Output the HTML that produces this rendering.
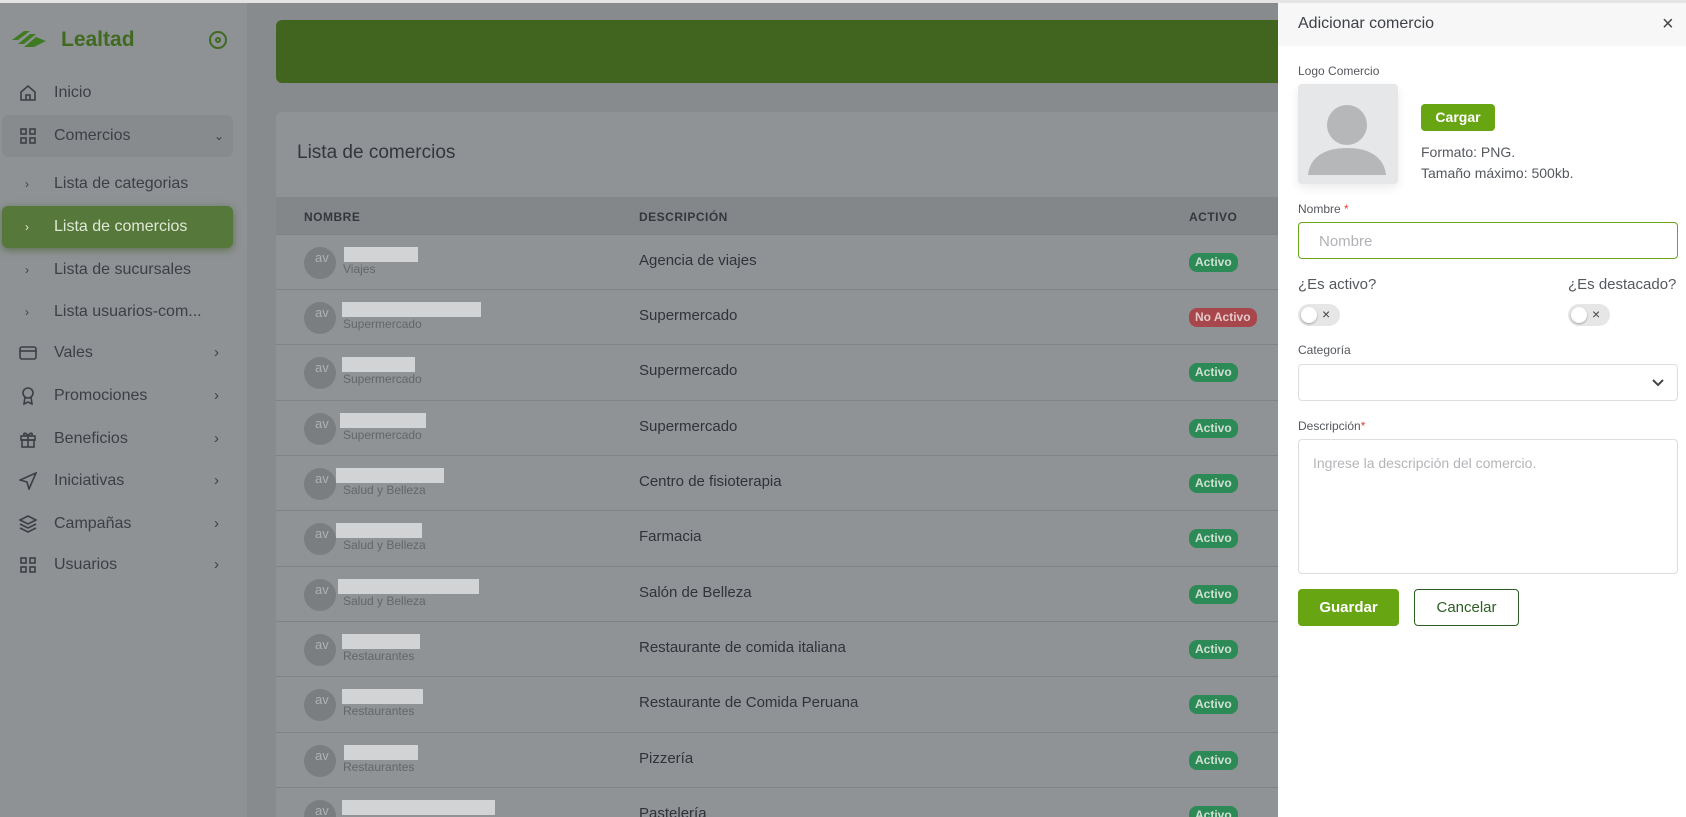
<!DOCTYPE html>
<html style="width:1686px;height:817px;overflow:hidden"><head><meta charset="utf-8"><style>
*{box-sizing:border-box;margin:0;padding:0}
body{width:1686px;height:817px;overflow:hidden;font-family:"Liberation Sans",sans-serif;background:#878b8e;position:relative}
.topline{position:absolute;left:0;top:0;width:1686px;height:3px;background:#e4e4e4;z-index:5}
.sb{position:absolute;left:0;top:0;width:247px;height:817px;background:#8e9295}
.logo{position:absolute;left:12px;top:28px}
.brand{position:absolute;left:61px;top:28px;font-size:21px;font-weight:bold;color:#3f6a1f}
.tgl{position:absolute;left:209px;top:31px;width:18px;height:18px;border:2px solid #3f6a1f;border-radius:50%}
.tgl:after{content:"";position:absolute;left:4px;top:4px;width:6px;height:6px;border:2px solid #3f6a1f;border-radius:50%;box-sizing:border-box}
.it{position:absolute;left:0;width:247px;height:30px;font-size:16px;color:#3c3f44;line-height:30px}
.it .t{position:absolute;left:54px}
.it .ic{position:absolute;left:19px;top:6px;width:18px;height:18px}
.it .ar{position:absolute;left:214px;font-size:15px}
.it .sm{position:absolute;left:25px;font-size:12px}
.hl{position:absolute;left:2px;width:231px;border-radius:6px}
.main-green{position:absolute;left:276px;top:20px;width:1100px;height:63px;background:#41651f;border-radius:6px}
.card{position:absolute;left:276px;top:112px;width:1100px;height:705px;background:#8f9396;border-radius:6px 6px 0 0;overflow:hidden}
.ctitle{position:absolute;left:297px;top:142px;font-size:19px;color:#33363b}
.thead{position:absolute;left:276px;top:197px;width:1100px;height:37px;background:#83878a}
.th{position:absolute;top:210px;font-size:12px;font-weight:bold;color:#34373c;letter-spacing:.5px}
.row{position:absolute;left:276px;width:1100px;height:55px;border-top:1px solid #7f8386;overflow:hidden}
.av{position:absolute;left:28px;top:12px;width:32px;height:32px;border-radius:50%;background:#7a7e80;overflow:hidden;font-size:13px;color:#aeb1b3;line-height:22px;padding-left:11px}
.bar{position:absolute;top:12px;height:15px;background:#d2d3d4}
.sub{position:absolute;left:67px;top:27px;font-size:12px;color:#63676a}
.desc{position:absolute;left:363px;top:17px;font-size:15px;color:#30333a}
.bd{position:absolute;left:913px;top:18px;height:19px;border-radius:8px;font-size:12px;font-weight:bold;color:#cfe0d3;line-height:19px;padding:0 6px;background:#2c8a56}
.bd.no{background:#a8474b;color:#e4c9ca}
.panel{position:absolute;left:1278px;top:0;width:408px;height:817px;background:#fff;z-index:3}
.ph{height:46px;background:#f7f7f7;position:relative}
.ph .tt{position:absolute;left:20px;top:15px;font-size:16px;color:#3e4148}
.ph .x{position:absolute;left:384px;top:13px;font-size:20px;color:#444}
.lbl{position:absolute;left:20px;font-size:12px;color:#55585e}
.lbl b{color:#e04040;font-weight:normal}
.imgbox{position:absolute;left:20px;top:84px;width:100px;height:100px;background:#e6e7e8;border-radius:4px;overflow:hidden;box-shadow:0 4px 10px rgba(0,0,0,.08)}
.btn{position:absolute;border-radius:4px;font-size:15px;text-align:center}
.inp{position:absolute;left:20px;width:380px;border:1px solid #dcdde0;border-radius:4px}
.sw{position:absolute;top:304px;width:42px;height:22px;border-radius:11px;background:#e6e6e6}
.sw:before{content:"";position:absolute;left:3px;top:3px;width:16px;height:16px;border-radius:50%;background:#fff;box-shadow:0 1px 2px rgba(0,0,0,.3)}
.sw:after{content:"×";position:absolute;left:24px;top:2px;font-size:14px;color:#444}
</style></head><body>
<div class="topline"></div>
<div class="sb">
<svg class="logo" width="36" height="22" viewBox="0 0 36 22"><path d="M0 12 L12 3 L18 3 L6 12Z M6 16 L18 6 L24 6 L12 16Z M12 19 L24 9 L34 13 L22 19Z" fill="#3f7a22"/></svg>
<div class="brand">Lealtad</div>
<div class="tgl"></div>
<div class="hl" style="top:115px;height:42px;background:#878b8e"></div>
<div class="hl" style="top:206px;height:42px;background:#56783b;box-shadow:0 2px 8px rgba(60,90,30,.6)"></div>
<div class="it" style="top:78px"><svg class="ic" viewBox="0 0 18 18" fill="none" stroke="#3c3f44" stroke-width="1.6"><path d="M2 8 L9 2 L16 8 V16 H2Z M7 16 V11 H11 V16"/></svg><span class="t">Inicio</span></div>
<div class="it" style="top:121px"><svg class="ic" viewBox="0 0 18 18" fill="none" stroke="#3c3f44" stroke-width="1.6"><rect x="2" y="2" width="5" height="5"/><rect x="11" y="2" width="5" height="5"/><rect x="2" y="11" width="5" height="5"/><rect x="11" y="11" width="5" height="5"/></svg><span class="t">Comercios</span><span class="ar" style="font-size:12px">⌄</span></div>
<div class="it" style="top:169px"><span class="sm">›</span><span class="t">Lista de categorias</span></div>
<div class="it" style="top:212px;color:#dfe8d6"><span class="sm">›</span><span class="t">Lista de comercios</span></div>
<div class="it" style="top:255px"><span class="sm">›</span><span class="t">Lista de sucursales</span></div>
<div class="it" style="top:297px"><span class="sm">›</span><span class="t">Lista usuarios-com...</span></div>
<div class="it" style="top:338px"><svg class="ic" viewBox="0 0 18 18" fill="none" stroke="#3c3f44" stroke-width="1.6"><rect x="1" y="3" width="16" height="12" rx="2"/><path d="M1 7 H17"/></svg><span class="t">Vales</span><span class="ar">›</span></div>
<div class="it" style="top:381px"><svg class="ic" viewBox="0 0 18 18" fill="none" stroke="#3c3f44" stroke-width="1.6"><circle cx="9" cy="6" r="5"/><path d="M6 10 L5 17 L9 15 L13 17 L12 10"/></svg><span class="t">Promociones</span><span class="ar">›</span></div>
<div class="it" style="top:424px"><svg class="ic" viewBox="0 0 18 18" fill="none" stroke="#3c3f44" stroke-width="1.6"><rect x="2" y="6" width="14" height="4"/><rect x="3" y="10" width="12" height="7"/><path d="M9 6 V17 M9 6 C6 1 3 4 6 6 M9 6 C12 1 15 4 12 6"/></svg><span class="t">Beneficios</span><span class="ar">›</span></div>
<div class="it" style="top:466px"><svg class="ic" viewBox="0 0 18 18" fill="none" stroke="#3c3f44" stroke-width="1.6"><path d="M17 1 L1 8 L8 10 L10 17Z"/></svg><span class="t">Iniciativas</span><span class="ar">›</span></div>
<div class="it" style="top:509px"><svg class="ic" viewBox="0 0 18 18" fill="none" stroke="#3c3f44" stroke-width="1.6"><path d="M9 1 L17 5 L9 9 L1 5Z M1 9 L9 13 L17 9 M1 13 L9 17 L17 13"/></svg><span class="t">Campañas</span><span class="ar">›</span></div>
<div class="it" style="top:550px"><svg class="ic" viewBox="0 0 18 18" fill="none" stroke="#3c3f44" stroke-width="1.6"><rect x="2" y="2" width="5" height="5"/><rect x="11" y="2" width="5" height="5"/><rect x="2" y="11" width="5" height="5"/><rect x="11" y="11" width="5" height="5"/></svg><span class="t">Usuarios</span><span class="ar">›</span></div>
</div>
<div class="main-green"></div>
<div class="card"></div>
<div class="ctitle">Lista de comercios</div>
<div class="thead"></div>
<div class="th" style="left:304px">NOMBRE</div>
<div class="th" style="left:639px">DESCRIPCIÓN</div>
<div class="th" style="left:1189px">ACTIVO</div>

<div class="row" style="top:234px"><div class="av">av</div><div class="bar" style="left:68px;width:74px"></div><div class="sub">Viajes</div><div class="desc">Agencia de viajes</div><div class="bd">Activo</div></div>
<div class="row" style="top:289px"><div class="av">av</div><div class="bar" style="left:66px;width:139px"></div><div class="sub">Supermercado</div><div class="desc">Supermercado</div><div class="bd no">No Activo</div></div>
<div class="row" style="top:344px"><div class="av">av</div><div class="bar" style="left:66px;width:73px"></div><div class="sub">Supermercado</div><div class="desc">Supermercado</div><div class="bd">Activo</div></div>
<div class="row" style="top:400px"><div class="av">av</div><div class="bar" style="left:64px;width:86px"></div><div class="sub">Supermercado</div><div class="desc">Supermercado</div><div class="bd">Activo</div></div>
<div class="row" style="top:455px"><div class="av">av</div><div class="bar" style="left:60px;width:108px"></div><div class="sub">Salud y Belleza</div><div class="desc">Centro de fisioterapia</div><div class="bd">Activo</div></div>
<div class="row" style="top:510px"><div class="av">av</div><div class="bar" style="left:60px;width:86px"></div><div class="sub">Salud y Belleza</div><div class="desc">Farmacia</div><div class="bd">Activo</div></div>
<div class="row" style="top:566px"><div class="av">av</div><div class="bar" style="left:62px;width:141px"></div><div class="sub">Salud y Belleza</div><div class="desc">Salón de Belleza</div><div class="bd">Activo</div></div>
<div class="row" style="top:621px"><div class="av">av</div><div class="bar" style="left:66px;width:78px"></div><div class="sub">Restaurantes</div><div class="desc">Restaurante de comida italiana</div><div class="bd">Activo</div></div>
<div class="row" style="top:676px"><div class="av">av</div><div class="bar" style="left:66px;width:81px"></div><div class="sub">Restaurantes</div><div class="desc">Restaurante de Comida Peruana</div><div class="bd">Activo</div></div>
<div class="row" style="top:732px"><div class="av">av</div><div class="bar" style="left:68px;width:74px"></div><div class="sub">Restaurantes</div><div class="desc">Pizzería</div><div class="bd">Activo</div></div>
<div class="row" style="top:787px;height:30px"><div class="av">av</div><div class="bar" style="left:66px;width:153px"></div><div class="desc">Pastelería</div><div class="bd">Activo</div></div>

<div class="panel">
<div class="ph"><div class="tt">Adicionar comercio</div><div class="x">×</div></div>
<div class="lbl" style="top:64px">Logo Comercio</div>
<div class="imgbox"><svg width="100" height="100" viewBox="0 0 100 100"><circle cx="49" cy="41" r="20" fill="#b5b7b9"/><path d="M10 91 C12 72 28 64 49 64 C70 64 86 72 88 91Z" fill="#b5b7b9"/></svg></div>
<div class="btn" style="left:143px;top:104px;width:74px;height:27px;background:#68a512;color:#fff;font-weight:bold;font-size:14px;line-height:27px">Cargar</div>
<div class="lbl" style="left:143px;top:144px;font-size:14px">Formato: PNG.</div>
<div class="lbl" style="left:143px;top:165px;font-size:14px">Tamaño máximo: 500kb.</div>
<div class="lbl" style="top:202px">Nombre <b>*</b></div>
<div class="inp" style="top:222px;height:37px;border:1.5px solid #6aa51a;font-size:15px;color:#b0b2b6;padding:10px 20px">Nombre</div>
<div class="lbl" style="top:276px;font-size:15px">¿Es activo?</div>
<div class="lbl" style="left:290px;top:276px;font-size:15px">¿Es destacado?</div>
<div class="sw" style="left:20px"></div>
<div class="sw" style="left:290px"></div>
<div class="lbl" style="top:343px">Categoría</div>
<div class="inp" style="top:364px;height:37px"><svg style="position:absolute;right:12px;top:13px" width="14" height="10" viewBox="0 0 14 10"><path d="M2 2 L7 7 L12 2" fill="none" stroke="#444" stroke-width="2"/></svg></div>
<div class="lbl" style="top:419px">Descripción<b>*</b></div>
<div class="inp" style="top:439px;height:135px;font-size:14px;color:#b3b5b9;padding:15px 14px">Ingrese la descripción del comercio.</div>
<div class="btn" style="left:20px;top:589px;width:101px;height:37px;background:#68a512;color:#fff;font-weight:bold;line-height:37px">Guardar</div>
<div class="btn" style="left:136px;top:589px;width:105px;height:37px;border:1px solid #2e5e25;color:#2e5e25;line-height:35px">Cancelar</div>
</div>
</body></html>
